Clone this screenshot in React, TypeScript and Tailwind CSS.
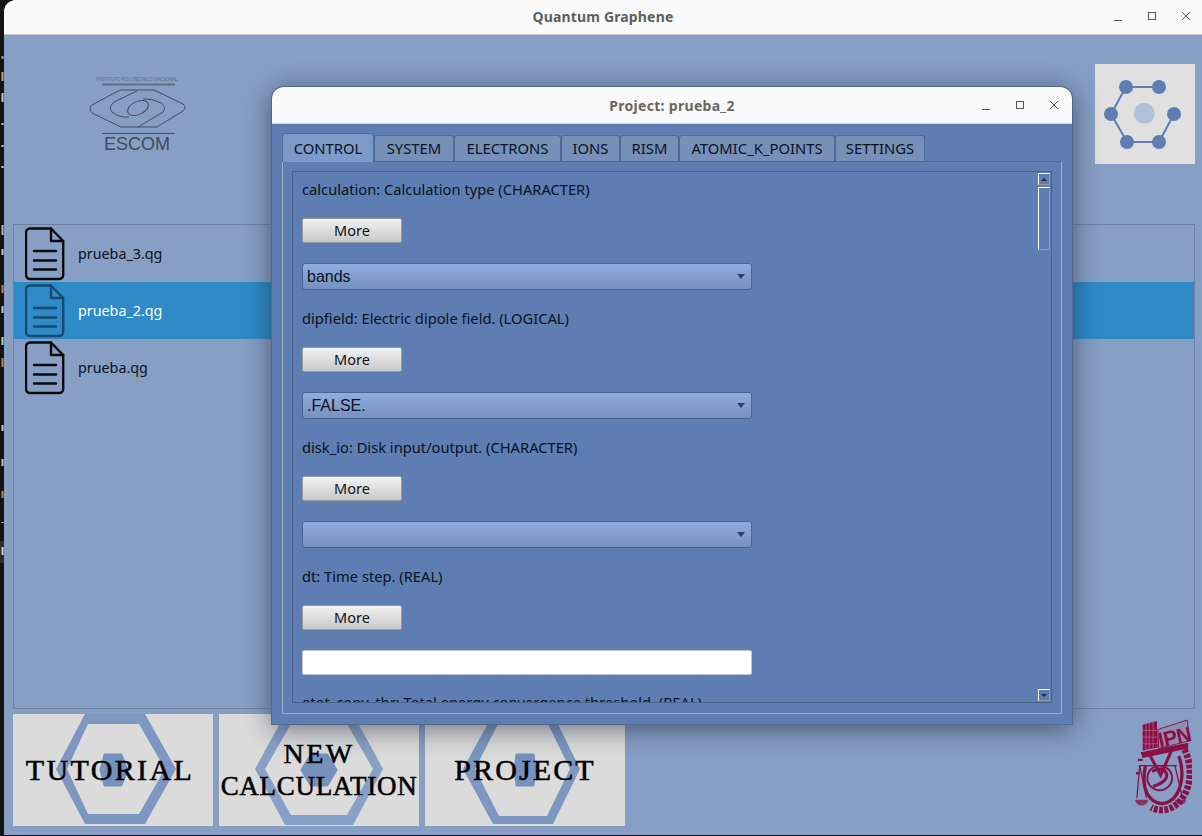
import React from "react";

const sans = "font-['Noto_Sans',sans-serif]";

function Doc({ color }: { color: string }) {
  return (
    <svg width="40" height="54" viewBox="0 0 40 54" fill="none" stroke={color} strokeWidth="2.4" strokeLinejoin="round" strokeLinecap="round">
      <path d="M5 1.5H26L38.2 14V48a4 4 0 0 1-4 4H5a4 4 0 0 1-4-4V5.500a4 4 0 0 1 4-4Z" />
      <path d="M26 1.500V14H38.200" />
      <path d="M9 24H31M9 33.500H31M9 42.500H31" />
    </svg>
  );
}

function FileRow({ name, selected }: { name: string; selected?: boolean }) {
  return (
    <div className={`flex h-[57px] items-center ${selected ? "bg-[#2e8bc8]" : ""}`}>
      <div className="ml-[11px] w-[53px]">
        <Doc color={selected ? "#174a6e" : "#0a0a0a"} />
      </div>
      <span className={`text-[14.3px] ${sans} ${selected ? "text-white" : "text-[#0c1220]"}`}>{name}</span>
    </div>
  );
}

function Hex({
  outer,
  inner,
  core,
  ring,
  dot,
}: {
  outer: string;
  inner: string;
  core: string;
  ring: string;
  dot: string;
}) {
  return (
    <svg className="absolute inset-0" width="200" height="112" viewBox="0 0 200 112">
      <path fillRule="evenodd" fill={ring} d={`M${outer}Z M${inner}Z`} />
      <path fill={dot} d={core} stroke={dot} strokeWidth="3" strokeLinejoin="round" />
    </svg>
  );
}

function BigButton({ children, hex }: { children: React.ReactNode; hex: React.ReactNode }) {
  return (
    <div className="relative flex h-[112px] w-[200px] flex-col items-center justify-center overflow-hidden bg-[#dbdbdb] font-['Liberation_Serif',serif] text-black [-webkit-text-stroke:0.55px_black]">
      {hex}
      {children}
    </div>
  );
}

function EscomLogo() {
  return (
    <div className="flex w-[100px] flex-col items-center">
      <div className="h-[7px] whitespace-nowrap font-['Liberation_Sans',sans-serif] text-[4.6px] leading-[7px] text-[#5d6a80]">
        INSTITUTO POLITÉCNICO NACIONAL
      </div>
      <svg width="100" height="53" viewBox="0 0 100 53" fill="none" stroke="#454d5e" strokeWidth="1">
        <path d="M15 1.500H88" stroke="#5f6f8b" strokeWidth="2" />
        <path d="M33 7H67L96 21Q100 25 96 28L70 44H34L5 30Q1 25 5 22Z" />
        <path d="M50 8L27 19Q21 24 25 29Q33 35 42 34" />
        <path d="M51 44L76 29Q80 24 74 20Q65 15 56 16" />
        <ellipse cx="51" cy="25" rx="11" ry="6.500" transform="rotate(-25 51 25)" />
        <path d="M15 50.500H88" strokeWidth="1.200" />
      </svg>
      <div className="font-['Liberation_Sans',sans-serif] text-[18px] font-normal leading-[17px] text-[#434a5b]">
        ESCOM
      </div>
    </div>
  );
}

function MoleculeLogo() {
  const nodes: [number, number][] = [
    [31, 23],
    [64, 23],
    [16, 50],
    [79, 50],
    [32, 78],
    [64, 78],
  ];
  return (
    <div className="h-[100px] w-[100px] bg-[#e0e0e0]">
      <svg width="100" height="100" viewBox="0 0 100 100">
        <path d="M31 23H64M31 23L16 50L32 78H64L79 50" fill="none" stroke="#5e7db3" strokeWidth="2" />
        <circle cx="49.300" cy="49.300" r="10.500" fill="#b0c1dc" />
        {nodes.map(([x, y]) => (
          <circle key={`${x}-${y}`} cx={x} cy={y} r="7" fill="#5e7db3" />
        ))}
      </svg>
    </div>
  );
}

function IpnLogo() {
  const c = "#8a0f47";
  return (
    <svg width="57" height="99" viewBox="0 0 60 104">
      <path d="M8 7L23 3L24 31L8 34Z" fill={c} />
      <path d="M11.500 6V33M15 5V33M19 4V32M8 13H24M8 20H24M8 27H24" stroke="#b9618c" strokeWidth="0.8" fill="none" />
      <path d="M24 12L55 2L57 24L25 32Z" fill="#a7708f" fillOpacity="0.35" stroke={c} strokeWidth="1" />
      <text x="26" y="31" fill={c} fontFamily="Liberation Sans, sans-serif" fontWeight="700" fontSize="22" letterSpacing="-0.5" transform="rotate(-12 26 31)">
        IPN
      </text>
      <path d="M6 36L56 26V32L8 42Z" fill={c} />
      <g fill="none" stroke={c}>
        <path d="M52 33C60 48 60 70 50 84C42 96 28 100 17 94" strokeWidth="7" strokeDasharray="4 1.600" />
        <path d="M46 40C52 55 50 75 40 85C31 93 20 91 13 80C9 72 9 60 11 50" strokeWidth="3.500" />
        <circle cx="26" cy="63" r="13" strokeWidth="2" />
        <path d="M18 56Q30 50 33 58T19 72" strokeWidth="3.200" />
        <path d="M14 36L27 60L39 33" strokeWidth="3.200" />
        <path d="M4 50H44M5 50L2 84M42 50L50 84M5 50L12 84" strokeWidth="1.300" />
        <path d="M3 44H8M1 58H5" strokeWidth="2.500" />
      </g>
      <path d="M0 86H14Q13 92 7 92Q1 92 0 86ZM42 86H54Q53 91 48 91Q43 91 42 86Z" fill={c} fillOpacity="0.75" />
    </svg>
  );
}

function WinControls() {
  return (
    <div className="flex items-center gap-[24px]">
      <svg width="10" height="10" viewBox="0 0 10 10"><path d="M1 9.500H9" stroke="#555" strokeWidth="1" /></svg>
      <svg width="10" height="10" viewBox="0 0 10 10"><rect x="1.500" y="1.500" width="7" height="7" fill="none" stroke="#555" strokeWidth="1" /></svg>
      <svg width="10" height="10" viewBox="0 0 10 10"><path d="M1 1L9 9M9 1L1 9" stroke="#555" strokeWidth="1" /></svg>
    </div>
  );
}

function Tab({ label, active, w }: { label: string; active?: boolean; w: string }) {
  return (
    <div
      className={`flex items-center justify-center rounded-t-[3px] border border-b-0 border-[#4f6a99] text-[14.8px] text-[#0b1220] ${w} ${
        active ? "z-10 -mb-px h-[29px] bg-[#7c9ac7]" : "mt-[2px] h-[26px] bg-[#7690ba]"
      }`}
    >
      {label}
    </div>
  );
}

function Label({ children }: { children: React.ReactNode }) {
  return <div className="h-[20px] whitespace-nowrap text-[14.7px] leading-[20px] text-[#0b1220]">{children}</div>;
}

function More() {
  return (
    <div className="mt-[19px] flex h-[25px] w-[100px] items-center justify-center rounded-[2px] border border-[#9b9b9b] bg-gradient-to-b from-[#f2f2f2] to-[#c9c9c9] text-[14.5px] text-[#111]">
      More
    </div>
  );
}

function Combo({ value }: { value?: string }) {
  return (
    <div className="mt-[20px] flex h-[27px] w-[450px] items-center justify-between rounded-[3px] border border-[#4a648f] bg-gradient-to-b from-[#90ade0] to-[#7691c0] pl-[4px] pr-[6px] font-['Liberation_Sans',sans-serif] text-[16px] text-[#0b1220]">
      <span>{value}</span>
      <svg width="8" height="5" viewBox="0 0 8 5"><path d="M0 0H8L4 5Z" fill="#33415c" /></svg>
    </div>
  );
}

function Field({ label, value }: { label: string; value?: string }) {
  return (
    <div className="mb-[18px]">
      <Label>{label}</Label>
      <More />
      <Combo value={value} />
    </div>
  );
}

function Scrollbar() {
  const edge = "border border-b-[#9a9a9a] border-l-white border-r-[#9a9a9a] border-t-white";
  return (
    <div className="flex h-full w-[12px] flex-col items-stretch">
      <div className={`flex h-[12px] items-center justify-center ${edge}`}>
        <svg width="6" height="3" viewBox="0 0 6 3"><path d="M3 0L6 3H0Z" fill="#1f2a44" /></svg>
      </div>
      <div className={`mt-[2px] h-[63px] ${edge}`} />
      <div className="flex-1" />
      <div className={`flex h-[12px] items-center justify-center ${edge}`}>
        <svg width="6" height="3" viewBox="0 0 6 3"><path d="M0 0H6L3 3Z" fill="#1f2a44" /></svg>
      </div>
    </div>
  );
}

function Dialog() {
  return (
    <div className={`absolute left-[272px] top-[87px] flex h-[637px] w-[800px] flex-col overflow-hidden rounded-t-[12px] bg-[#5e7db3] shadow-[0_4px_28px_rgba(20,30,50,0.6)] ring-1 ring-[#56688a] ${sans}`}>
      <div className="relative flex h-[37px] shrink-0 items-center justify-center border-b border-[#d5d5d5] bg-[#fafafa]">
        <span className="text-[14px] font-bold tracking-[0.3px] text-[#6b6660]">Project: prueba_2</span>
        <div className="absolute right-[13px] top-[13px]">
          <WinControls />
        </div>
      </div>
      <div className="flex flex-1 flex-col px-[10px] pb-[10px] pt-[9px]">
        <div className="flex">
          <Tab label="CONTROL" active w="w-[92px]" />
          <Tab label="SYSTEM" w="w-[80px]" />
          <Tab label="ELECTRONS" w="w-[107px]" />
          <Tab label="IONS" w="w-[59px]" />
          <Tab label="RISM" w="w-[59px]" />
          <Tab label="ATOMIC_K_POINTS" w="w-[156px]" />
          <Tab label="SETTINGS" w="w-[90px]" />
        </div>
        <div className="flex flex-1 flex-col border border-b-[#9fb0ce] border-l-[#9fb0ce] border-r-[#9fb0ce] border-t-[#4f6a99] p-[9px]">
          <div className="flex h-[532px] overflow-hidden border border-[#4a648f]">
            <div className="flex-1 overflow-hidden pl-[9px] pt-[7px]">
              <Field label="calculation: Calculation type (CHARACTER)" value="bands" />
              <Field label="dipfield: Electric dipole field. (LOGICAL)" value=".FALSE." />
              <Field label="disk_io: Disk input/output. (CHARACTER)" />
              <Label>dt: Time step. (REAL)</Label>
              <More />
              <div className="mb-[17px] mt-[20px] h-[25px] w-[450px] rounded-[2px] border border-[#c5c5c5] bg-white" />
              <Label>etot_conv_thr: Total energy convergence threshold. (REAL)</Label>
            </div>
            <div className="py-[1px] pr-[1px]">
              <Scrollbar />
            </div>
          </div>
        </div>
      </div>
    </div>
  );
}

function TerminalStrip() {
  const marks: [number, number, string][] = [
    [56, 3, "#9aa0a6"],
    [72, 9, "#c9a765"],
    [93, 9, "#c9c9c9"],
    [123, 2, "#d0d0d0"],
    [145, 2, "#d0d0d0"],
    [166, 2, "#d0d0d0"],
    [225, 10, "#b8b8b8"],
    [249, 6, "#c9c9c9"],
    [285, 8, "#c08a4a"],
    [306, 7, "#c9c9c9"],
    [337, 8, "#c9c9c9"],
    [358, 9, "#c08a4a"],
    [425, 6, "#c9c9c9"],
    [459, 7, "#c9c9c9"],
    [491, 7, "#c08a4a"],
    [522, 1, "#c9c9c9"],
    [547, 8, "#d0d0d0"],
  ];
  return (
    <svg className="shrink-0" width="4" height="836" viewBox="0 0 4 836">
      <rect width="4" height="836" fill="#141414" />
      <rect y="541" width="4" height="22" fill="#2c2c2c" />
      {marks.map(([y, h, c]) => (
        <rect key={y} x="1.500" y={y} width="2" height={h} fill={c} />
      ))}
    </svg>
  );
}

export default function App() {
  return (
    <div className="relative flex h-[836px] w-[1202px] overflow-hidden bg-[#111]">
      <TerminalStrip />
      <div className={`flex h-[835px] w-[1198px] flex-col overflow-hidden rounded-tl-[12px] bg-[#879fc5] ${sans}`}>
        <div className="relative flex h-[35px] shrink-0 items-center justify-center border-b border-[#c4c4c4] bg-[#fafafa]">
          <span className="-mt-[1px] text-[14px] font-bold tracking-[0.15px] text-[#5e5e5e]">Quantum Graphene</span>
          <div className="absolute right-[11px] top-[11px]">
            <WinControls />
          </div>
        </div>
        <div className="flex h-[189px] shrink-0 items-start justify-between pl-[83px] pr-[7px] pt-[29px]">
          <div className="pt-[12px]">
            <EscomLogo />
          </div>
          <MoleculeLogo />
        </div>
        <div className="ml-[9px] mr-[7px] h-[485px] shrink-0 border border-[#6f82a5]">
          <FileRow name="prueba_3.qg" />
          <FileRow name="prueba_2.qg" selected />
          <FileRow name="prueba.qg" />
        </div>
        <div className="flex items-start pl-[9px] pr-[7px] pt-[5px]">
          <div className="flex gap-[6px]">
            <BigButton
              hex={
                <Hex
                  ring="#7d97c0"
                  dot="#7691bd"
                  outer="43 55L72 0H132L163 55L132 110H72"
                  inner="54 55L75 10H126L152 55L126 100H75"
                  core="M92 41H108L114 56L108 71H92L88 56Z"
                />
              }
            >
              <div className="relative whitespace-nowrap pr-[6px] text-[30px] leading-[34px] tracking-[2.4px]">TUTORIAL</div>
            </BigButton>
            <BigButton
              hex={
                <Hex
                  ring="#88a0c5"
                  dot="#7691bd"
                  outer="36 55L66 0H134L164 55L134 111H66"
                  inner="46 55L72 10H128L154 55L128 101H72"
                  core="M92 41H108L117 56L108 71H92L83 56Z"
                />
              }
            >
              <div className="relative whitespace-nowrap text-[28px] leading-[33px] tracking-[2.4px]">NEW</div>
              <div className="relative whitespace-nowrap text-[27px] leading-[33px] tracking-[0.7px]">CALCULATION</div>
            </BigButton>
            <BigButton
              hex={
                <Hex
                  ring="#7d97c0"
                  dot="#7691bd"
                  outer="38 55L68 0H128L155 55L128 110H68"
                  inner="50 55L74 8H122L145 55L122 102H74"
                  core="M92 41H108L110 56L108 71H92L90 56Z"
                />
              }
            >
              <div className="relative whitespace-nowrap text-[30px] leading-[34px] tracking-[2.1px]">PROJECT</div>
            </BigButton>
          </div>
          <div className="ml-auto pr-[3px] pt-[4px]">
            <IpnLogo />
          </div>
        </div>
      </div>
      <Dialog />
    </div>
  );
}
